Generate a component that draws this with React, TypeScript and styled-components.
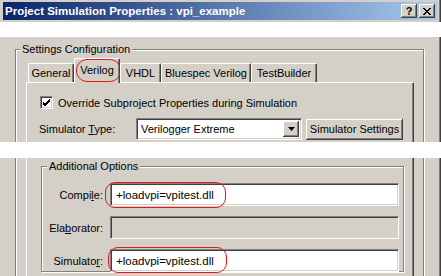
import styled, { createGlobalStyle } from 'styled-components';

const FACE = '#d4d0c8';
const SHADOW = '#808080';
const DARK = '#404040';
const RED = '#e8141a';

const GlobalStyle = createGlobalStyle`
  html, body {
    margin: 0;
    padding: 0;
    background: #fff;
  }
  body {
    font-family: "Liberation Sans", Arial, sans-serif;
    font-size: 11px;
    color: #000;
  }
`;

function App() {
  return (
    <Page>
      <GlobalStyle />
      <Section $h={22} $pad="2px 4px 0 3px">
        <TitleBar>
          <TitleText>Project Simulation Properties : vpi_example</TitleText>
          <CaptionButtons>
            <CaptionButton>?</CaptionButton>
            <CaptionButton>
              <svg width="8" height="7" viewBox="0 0 8 7">
                <path d="M0 0 L7 7 M1 0 L8 7 M7 0 L0 7 M8 0 L1 7" stroke="#000" strokeWidth="1" />
              </svg>
            </CaptionButton>
          </CaptionButtons>
        </TitleBar>
      </Section>

      <Gap $h={15} />

      <Section $h={105} $pad="12px 17px 0 15px">
        <GroupBox>
          <Legend>Settings Configuration</Legend>
          <GroupBody>
            <TabRow>
              <Tab $w={46}>General</Tab>
              <Tab $w={46} $active>
                Verilog
                <Mark $l={1} $t={0} $w={45} $h={23} $r={11} />
              </Tab>
              <Tab $w={41}>VHDL</Tab>
              <Tab $w={90}>Bluespec Verilog</Tab>
              <Tab $w={66}>TestBuilder</Tab>
            </TabRow>
            <Panel>
              <CheckRow>
                <CheckBox>
                  <svg width="9" height="9" viewBox="0 0 9 9">
                    <path d="M1 4 L3 6 L8 1 M1 5 L3 7 L8 2 M1 6 L3 8 L8 3" stroke="#000" strokeWidth="1" fill="none" />
                  </svg>
                </CheckBox>
                Override Subproject Properties during Simulation
              </CheckRow>
              <SimRow>
                <SimLabel>
                  Simulator <u>T</u>ype:
                </SimLabel>
                <Select>
                  <SelectText>Verilogger Extreme</SelectText>
                  <DropButton>
                    <svg width="7" height="4" viewBox="0 0 7 4">
                      <path d="M0 0 H7 L3.5 4 Z" fill="#000" />
                    </svg>
                  </DropButton>
                </Select>
                <PushButton>
                  Simulator Settin<u>g</u>s
                </PushButton>
              </SimRow>
            </Panel>
          </GroupBody>
        </GroupBox>
      </Section>

      <Gap $h={16} />

      <Section $h={118} $pad="0 17px 0 15px">
        <GroupBoxRest>
          <PanelRest>
            <OptionsBox>
              <Legend>Additional Options</Legend>
              <FieldRow>
                <FieldLabel>
                  Compi<u>l</u>e:
                </FieldLabel>
                <Field>
                  +loadvpi=vpitest.dll
                  <Mark $l={-6} $t={-2} $w={121} $h={26} $r={10} />
                </Field>
              </FieldRow>
              <FieldRow>
                <FieldLabel>
                  Ela<u>b</u>orator:
                </FieldLabel>
                <Field $disabled />
              </FieldRow>
              <FieldRow>
                <FieldLabel>
                  Simulato<u>r</u>:
                </FieldLabel>
                <Field>
                  +loadvpi=vpitest.dll
                  <Mark $l={-3} $t={-3} $w={119} $h={26} $r={10} />
                </Field>
              </FieldRow>
            </OptionsBox>
          </PanelRest>
        </GroupBoxRest>
      </Section>
    </Page>
  );
}

export default App;

const Page = styled.div`
  width: 441px;
  height: 276px;
  overflow: hidden;
  background: #fff;
`;

const Gap = styled.div<{ $h: number }>`
  height: ${({ $h }) => $h}px;
  background: #fff;
`;

const Section = styled.div<{ $h: number; $pad: string }>`
  display: flex;
  flex-direction: column;
  height: ${({ $h }) => $h}px;
  padding: ${({ $pad }) => $pad};
  box-sizing: border-box;
  overflow: hidden;
  background: ${FACE};
  box-shadow: inset 2px 0 0 ${FACE}, inset 1px 0 0 #fff, inset -1px 0 0 ${DARK}, inset -2px 0 0 ${SHADOW};
`;

const TitleBar = styled.div`
  display: flex;
  align-items: center;
  justify-content: space-between;
  height: 18px;
  padding: 0 2px 0 2px;
  background: linear-gradient(to right, #0a246a, #a6caf0);
`;

const TitleText = styled.span`
  color: #fff;
  font-weight: bold;
  font-size: 11.5px;
`;

const CaptionButtons = styled.div`
  display: flex;
  gap: 2px;
`;

const CaptionButton = styled.div`
  display: flex;
  align-items: center;
  justify-content: center;
  width: 16px;
  height: 14px;
  background: ${FACE};
  font-weight: bold;
  font-size: 11px;
  box-shadow: inset -1px -1px 0 ${DARK}, inset 1px 1px 0 #fff, inset -2px -2px 0 ${SHADOW};
`;

const GroupBox = styled.div`
  display: flex;
  flex-direction: column;
  flex: 1;
  border: 1px solid ${SHADOW};
  border-bottom: none;
  box-shadow: inset 1px 1px 0 #fff, 1px 0 0 #fff;
`;

const GroupBody = styled.div`
  display: flex;
  flex-direction: column;
  flex: 1;
  padding: 0 9px 0 10px;
`;

const Legend = styled.div`
  align-self: flex-start;
  margin: -7px 0 0 4px;
  padding: 0 2px;
  line-height: 13px;
  background: ${FACE};
`;

const TabRow = styled.div`
  display: flex;
  align-items: flex-end;
  height: 25px;
  margin: 2px 0 -1px;
  padding-left: 2px;
  position: relative;
  z-index: 1;
`;

const Tab = styled.div<{ $w: number; $active?: boolean }>`
  position: relative;
  display: flex;
  align-items: center;
  justify-content: center;
  box-sizing: border-box;
  width: ${({ $w }) => $w}px;
  height: ${({ $active }) => ($active ? 25 : 19)}px;
  margin-bottom: ${({ $active }) => ($active ? 0 : 1)}px;
  padding-bottom: ${({ $active }) => ($active ? 2 : 0)}px;
  background: ${FACE};
  border-top: 1px solid #fff;
  border-left: 1px solid #fff;
  border-right: 1px solid ${DARK};
  border-radius: 2px 2px 0 0;
  box-shadow: inset -1px 0 0 ${SHADOW};
`;

const Mark = styled.span<{ $l: number; $t: number; $w: number; $h: number; $r: number }>`
  position: absolute;
  left: ${({ $l }) => $l}px;
  top: ${({ $t }) => $t}px;
  width: ${({ $w }) => $w}px;
  height: ${({ $h }) => $h}px;
  box-sizing: border-box;
  border: 1.6px solid ${RED};
  border-radius: ${({ $r }) => $r}px;
  pointer-events: none;
`;

const Panel = styled.div`
  flex: 1;
  padding: 13px 0 0 13px;
  border-top: 1px solid #fff;
  border-left: 1px solid #fff;
  border-right: 1px solid ${DARK};
  box-shadow: inset -1px 0 0 ${SHADOW};
`;

const CheckRow = styled.div`
  display: flex;
  align-items: center;
  gap: 5px;
  height: 13px;
`;

const CheckBox = styled.div`
  display: flex;
  align-items: center;
  justify-content: center;
  width: 13px;
  height: 13px;
  box-sizing: border-box;
  background: #fff;
  border-top: 1px solid ${SHADOW};
  border-left: 1px solid ${SHADOW};
  border-right: 1px solid #fff;
  border-bottom: 1px solid #fff;
  box-shadow: inset 1px 1px 0 ${DARK}, inset -1px -1px 0 ${FACE};
`;

const SimRow = styled.div`
  display: flex;
  align-items: center;
  margin-top: 9px;
`;

const SimLabel = styled.span`
  width: 97px;
  margin-left: -1px;
`;

const Select = styled.div`
  display: flex;
  align-items: center;
  width: 166px;
  height: 22px;
  box-sizing: border-box;
  padding: 2px;
  background: #fff;
  border-top: 1px solid ${SHADOW};
  border-left: 1px solid ${SHADOW};
  border-right: 1px solid #fff;
  border-bottom: 1px solid #fff;
  box-shadow: inset 1px 1px 0 ${DARK}, inset -1px -1px 0 ${FACE};
`;

const SelectText = styled.span`
  flex: 1;
  padding-left: 2px;
`;

const DropButton = styled.div`
  display: flex;
  align-items: center;
  justify-content: center;
  width: 16px;
  height: 16px;
  background: ${FACE};
  box-shadow: inset -1px -1px 0 ${DARK}, inset 1px 1px 0 #fff, inset -2px -2px 0 ${SHADOW};
`;

const PushButton = styled.div`
  display: flex;
  align-items: center;
  justify-content: center;
  width: 97px;
  height: 21px;
  margin-left: 4px;
  background: ${FACE};
  box-shadow: inset -1px -1px 0 ${DARK}, inset 1px 1px 0 #fff, inset -2px -2px 0 ${SHADOW};
`;

const GroupBoxRest = styled.div`
  display: flex;
  flex: 1;
  padding: 0 9px 0 10px;
  border-left: 1px solid ${SHADOW};
  border-right: 1px solid ${SHADOW};
  box-shadow: inset 1px 0 0 #fff, 1px 0 0 #fff;
`;

const PanelRest = styled.div`
  flex: 1;
  padding: 8px 9px 0 14px;
  border-left: 1px solid #fff;
  border-right: 1px solid ${DARK};
  box-shadow: inset -1px 0 0 ${SHADOW};
`;

const OptionsBox = styled.div`
  display: flex;
  flex-direction: column;
  gap: 10px;
  height: 106px;
  box-sizing: border-box;
  padding: 0 4px 0 1px;
  border: 1px solid ${SHADOW};
  box-shadow: inset 1px 1px 0 #fff, 1px 1px 0 #fff;
`;

const FieldRow = styled.div`
  display: flex;
  align-items: center;
  height: 23px;
`;

const FieldLabel = styled.span`
  width: 60px;
  margin-right: 7px;
  text-align: right;
`;

const Field = styled.div<{ $disabled?: boolean }>`
  position: relative;
  display: flex;
  align-items: center;
  flex: 1;
  height: 23px;
  box-sizing: border-box;
  padding-left: 5px;
  font-size: 11.5px;
  background: ${({ $disabled }) => ($disabled ? FACE : '#fff')};
  border-top: 1px solid ${SHADOW};
  border-left: 1px solid ${SHADOW};
  border-right: 1px solid #fff;
  border-bottom: 1px solid #fff;
  box-shadow: inset 1px 1px 0 ${DARK}, inset -1px -1px 0 ${FACE};
`;
